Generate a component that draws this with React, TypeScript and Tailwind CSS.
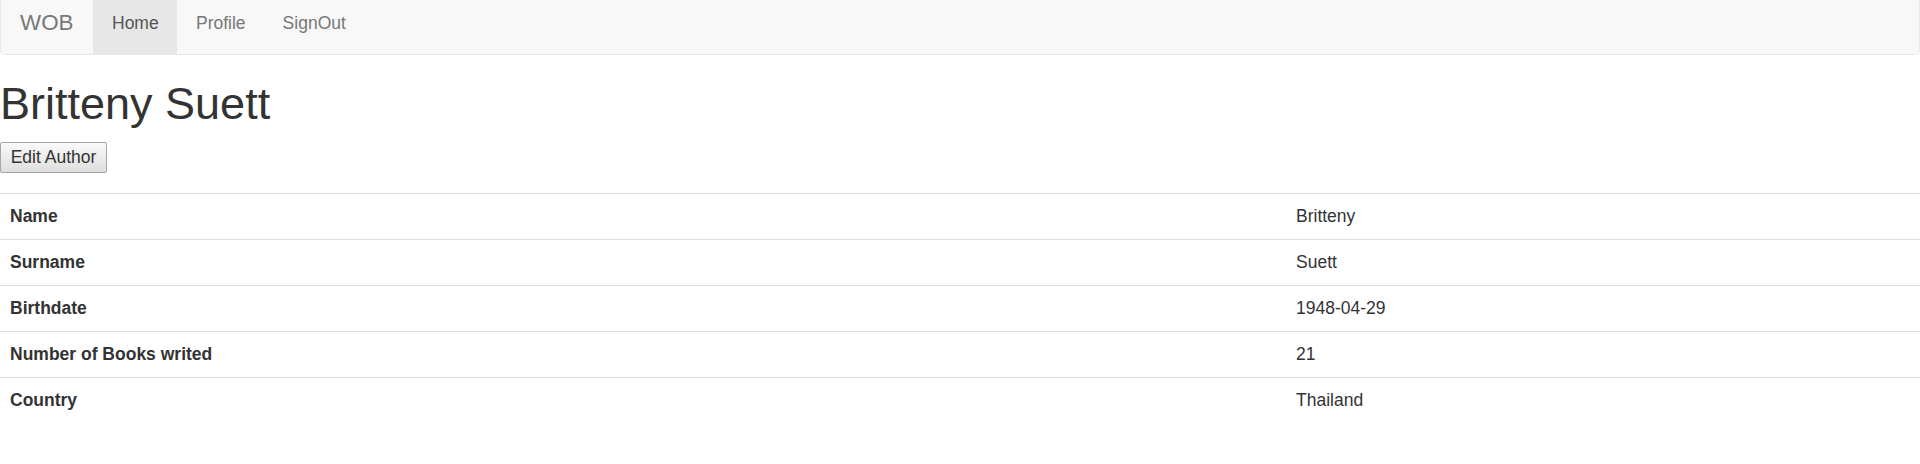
import React from "react";

const rows: [string, string][] = [
  ["Name", "Britteny"],
  ["Surname", "Suett"],
  ["Birthdate", "1948-04-29"],
  ["Number of Books writed", "21"],
  ["Country", "Thailand"],
];

export default function App() {
  return (
    <div
      className="w-[1920px] min-h-[464px] bg-white text-[#333]"
      style={{ fontFamily: '"Liberation Sans", Arial, sans-serif' }}
    >
      <nav className="flex h-[55px] border-x border-b border-[#e7e7e7] bg-[#f8f8f8] rounded-b-[5px]">
        <a className="w-[92px] h-[54px] pl-[19px] pt-[10.5px] text-[22.4px] leading-[24px] text-[#777]">
          WOB
        </a>
        <a className="w-[84px] h-[54px] pl-[19px] pt-[10.5px] text-[17.5px] leading-[24px] text-[#555] bg-[#e7e7e7]">
          Home
        </a>
        <a className="h-[54px] pl-[19px] pr-[18px] pt-[10.5px] text-[17.5px] leading-[24px] text-[#777]">
          Profile
        </a>
        <a className="h-[54px] px-[19px] pt-[10.5px] text-[17.5px] leading-[24px] text-[#777]">
          SignOut
        </a>
      </nav>
      <h1 className="mt-[25px] text-[45px] leading-[47.5px] font-normal text-[#333]">
        Britteny Suett
      </h1>
      <div className="mt-[14px]">
        <button className="h-[31px] w-[107px] border border-[#a6a6a6] rounded-[2px] bg-gradient-to-b from-[#fafafa] to-[#dedede] text-[17.5px] leading-[20px] text-[#333]">
          Edit Author
        </button>
      </div>
      <div className="mt-[20px]">
        {rows.map(([k, v]) => (
          <div
            key={k}
            className="grid grid-cols-[1286px_1fr] border-t border-[#ddd] h-[46px] text-[17.5px] leading-[24px]"
          >
            <div className="pl-[10px] pt-[10.5px] font-bold">{k}</div>
            <div className="pl-[10px] pt-[10.5px]">{v}</div>
          </div>
        ))}
      </div>
    </div>
  );
}
